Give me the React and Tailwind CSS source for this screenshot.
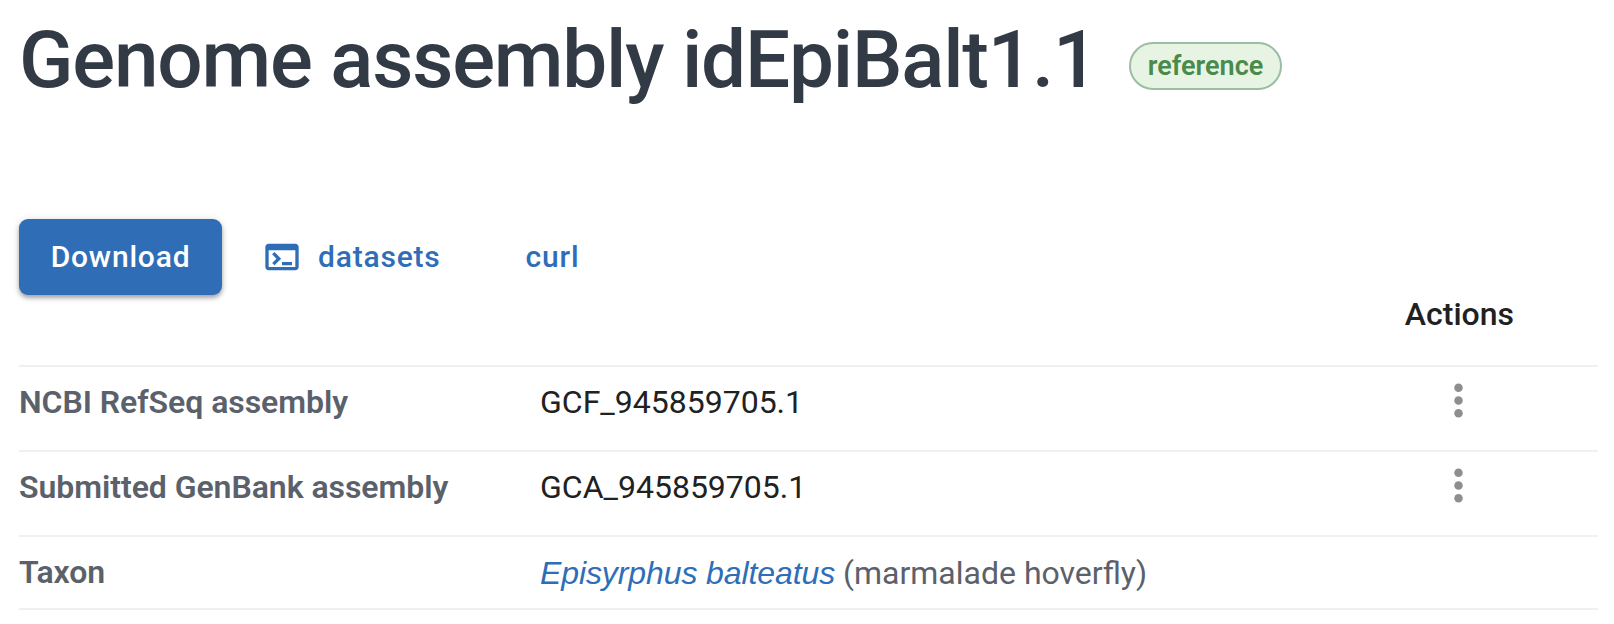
function TerminalIcon() {
  return (
    <svg viewBox="0 0 24 24" className="size-10 shrink-0" fill="currentColor" aria-hidden="true">
      <path d="M20 4H4c-1.11 0-2 .9-2 2v12c0 1.1.89 2 2 2h16c1.1 0 2-.9 2-2V6c0-1.1-.89-2-2-2zm0 14H4V8h16v10zm-2-1h-6v-2h6v2zM7.5 17l-1.41-1.41L8.67 13l-2.59-2.59L7.5 9l4 4-4 4z" />
    </svg>
  );
}

function MoreButton() {
  return (
    <button className="block size-[51px] text-[#8e8e8e]" aria-label="More actions">
      <svg viewBox="0 0 24 24" className="size-full" fill="currentColor" aria-hidden="true">
        <circle cx="12" cy="6" r="2" />
        <circle cx="12" cy="12" r="2" />
        <circle cx="12" cy="18" r="2" />
      </svg>
    </button>
  );
}

function AssemblyRow({ label, value }) {
  return (
    <div className="flex h-[85px] items-start border-b-2 border-[#f0f0f0]">
      <div className="w-[521px] pt-[11px] font-semibold leading-[48px] tracking-[-0.05px] text-[#5b616b]">{label}</div>
      <div className="grow pt-[11px] leading-[48px] text-[#212121]">{value}</div>
      <div className="mr-[114px] mt-2">
        <MoreButton />
      </div>
    </div>
  );
}

export default function App() {
  return (
    <main className="flex h-[624px] w-[1614px] flex-col overflow-hidden bg-white pl-[19px] pr-4 font-[Roboto,sans-serif] text-[32px]">
      <header className="flex h-[219px] items-start">
        <h1 className="w-[1074px] whitespace-nowrap pt-3 text-[80px] font-medium leading-[96px] tracking-[-1.2px] text-[#323a45]">
          Genome assembly idEpiBalt1.1
        </h1>
        <span className="ml-9 mt-[42px] flex h-12 w-[153px] items-center justify-center rounded-full border-2 border-[#9abda3] bg-[#e7f4e4] text-[27px] font-semibold text-[#4a8a4a]">
          reference
        </span>
      </header>

      <div className="flex h-[76px] shrink-0 items-center text-[30px] font-medium tracking-[0.8px] text-[#2f6eb7]">
        <button className="h-[76px] w-[203px] rounded-[9px] bg-[#2f6eb7] pb-0.5 text-white shadow-[0_3px_4px_rgba(0,0,0,0.3),0_1px_8px_rgba(0,0,0,0.12)]">
          Download
        </button>
        <button className="ml-10 flex items-center gap-4">
          <TerminalIcon />
          <span className="pb-0.5">datasets</span>
        </button>
        <button className="ml-[85px] pb-0.5">curl</button>
      </div>

      <section>
        <div className="flex h-[72px] items-start justify-end border-b-2 border-[#f0f0f0]">
          <div className="mr-[84px] -mt-[5px] font-medium leading-[48px] text-[#212121]">Actions</div>
        </div>
        <AssemblyRow label="NCBI RefSeq assembly" value="GCF_945859705.1" />
        <AssemblyRow label="Submitted GenBank assembly" value="GCA_945859705.1" />
        <div className="flex h-[73px] items-start border-b-2 border-[#f0f0f0]">
          <div className="w-[521px] pt-[11px] font-semibold leading-[48px] tracking-[-0.05px] text-[#5b616b]">Taxon</div>
          <div className="pt-3 leading-[48px] text-[#5b616b]">
            <a className="font-['Liberation_Sans',sans-serif] italic tracking-[-0.1px] text-[#2f6eb7]">Episyrphus balteatus</a>{' '}
            (marmalade hoverfly)
          </div>
        </div>
      </section>
    </main>
  );
}
